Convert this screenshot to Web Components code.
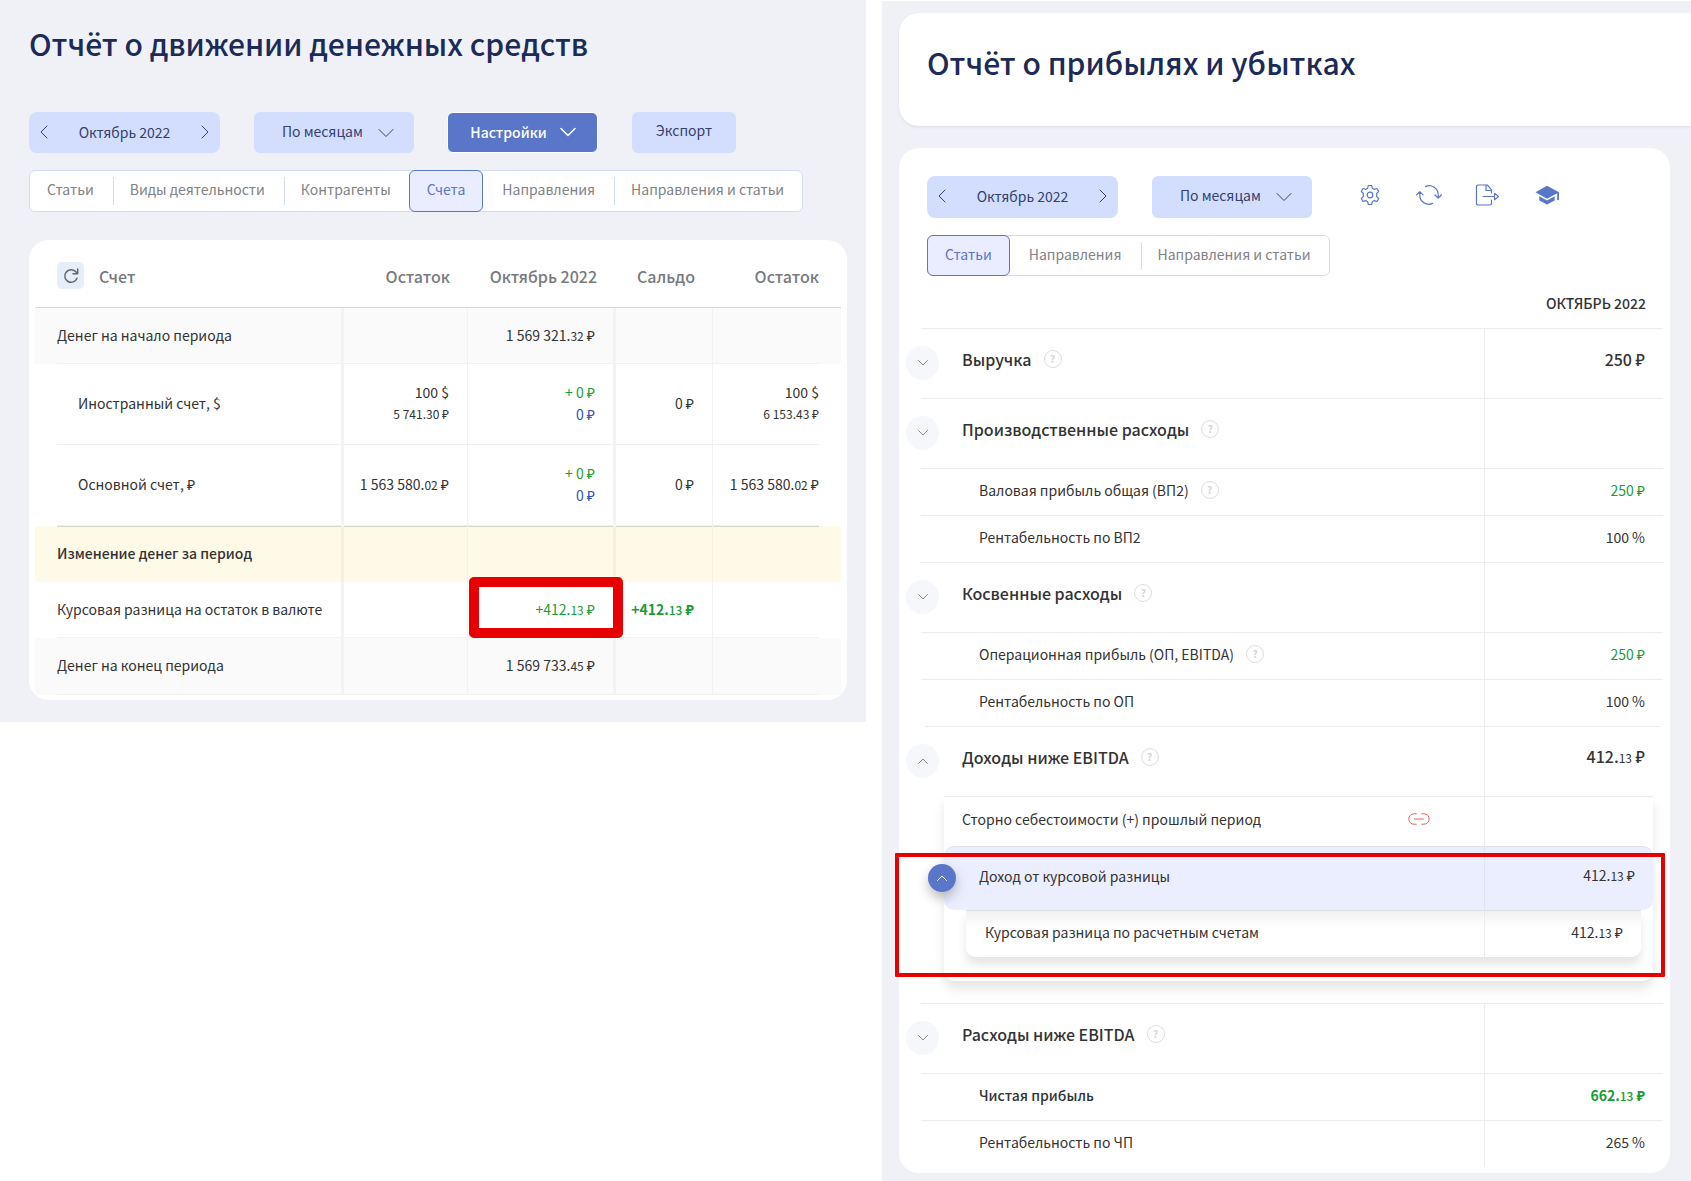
<!DOCTYPE html>
<html lang="ru">
<head>
<meta charset="utf-8">
<meta name="viewport" content="width=device-width, initial-scale=1">
<title>Финансовые отчёты</title>
<style>
  html { background: #fff; }
  body {
    margin: 0;
    font-family: "Noto Sans CJK SC", "Noto Sans", sans-serif;
    font-size: 14px;
    line-height: 20px;
    color: #333;
    --surface: #f0f1f7;
    --line: #ececee;
    --blue: #5a76c8;
    --soft-blue: #d3deff;
    --navy: #1c2a57;
    --green: #1a9c36;
    --mark: #e60000;
  }
</style>
</head>
<body>
<reports-page></reports-page>
<script>
const ICONS = {
  left: [12, 16, '<path d="M9 2 3 8l6 6"/>'],
  right: [12, 16, '<path d="m3 2 6 6-6 6"/>'],
  down: [16, 10, '<path d="m1 1.500 7 7 7-7"/>'],
  smallDown: [10, 6, '<path d="M.5.5 5 5 9.500.5"/>'],
  smallUp: [10, 6, '<path d="M.5 5.500 5 1l4.500 4.500"/>'],
  reload: [16, 16, '<path stroke-width="1.500" d="M14 10.200A6.300 6.300 0 1 1 12.600 3.600L14.500 5.600M14.700 1v4.800H10"/>'],
  gear: [22, 22, '<circle cx="11" cy="11" r="2.800"/><path d="M9.300 1.500h3.400l.6 2.700 2 1.200 2.700-.9 1.700 3-2 1.900v3.200l2 1.900-1.700 3-2.700-.9-2 1.200-.6 2.700H9.300l-.6-2.700-2-1.200-2.700.9-1.700-3 2-1.900V9.400l-2-1.900 1.700-3 2.700.9 2-1.200z"/>'],
  sync: [26, 22, '<path d="M9.500 2.600a9 9 0 0 1 12.700 8.300v3M19 11l3.200 3.200L25.400 11M16.500 19.400A9 9 0 0 1 3.800 11V7.600M.6 10.800l3.200-3.200L7 10.800"/>'],
  exportFile: [26, 22, '<path d="M16.500 9V5.800L12.300 1H3.200A1.700 1.700 0 0 0 1.500 2.700v16.600A1.700 1.700 0 0 0 3.200 21h11.600a1.700 1.700 0 0 0 1.700-1.700V16M11 1.300V6.500h5.300M8 12.500h11.500M19.500 9.300v6.400l4-3.200z"/>'],
  study: [24, 20, '<path fill="currentColor" stroke="none" d="M12 .8 24 7.200V15h-1.800V8.300L12 13.800.5 7.200zM4.300 11.200 12 15.400l7.700-4.200v4.300L12 19.600l-7.700-4.100z"/>'],
  link: [22, 12, '<path d="M8.300.8H6a5.200 5.200 0 0 0 0 10.400h2.300M13.700.8H16a5.200 5.200 0 0 1 0 10.400h-2.300M6.500 6h9"/>'],
};

function define(name, css, html) {
  customElements.define(name, class extends HTMLElement {
    connectedCallback() {
      if (this.shadowRoot) return;
      const attr = (key, fallback = '') => this.getAttribute(key) ?? fallback;
      this.attachShadow({ mode: 'open' }).innerHTML =
        `<style>*{box-sizing:border-box}:host{box-sizing:border-box}button,select{font:inherit;color:inherit;margin:0;padding:0;border:0;background:none;cursor:pointer}${css}</style>` +
        (typeof html === 'function' ? html(attr) : html);
    }
  });
}

define('ui-icon', `
  :host { display: inline-flex; flex: none; }
  svg { display: block; fill: none; stroke: currentColor; stroke-width: var(--stroke, 1.2); stroke-linecap: round; stroke-linejoin: round; }
`, attr => {
  const [w, h, body] = ICONS[attr('name')];
  return `<svg width="${w}" height="${h}" viewBox="0 0 ${w} ${h}" aria-hidden="true">${body}</svg>`;
});

/* Amount with small kopecks: "412.13 ₽" */
define('money-amount', `
  :host { white-space: nowrap; }
  small { font-size: 12px; font-weight: var(--cents-weight, inherit); }
`, attr => {
  const [whole, cents] = attr('value').split('.');
  return `${whole}${cents ? `.<small>${cents}</small>` : ''} <span>${attr('unit', '₽')}</span>`;
});

define('help-hint', `
  :host { display: inline-flex; flex: none; }
  button { width: 18px; height: 18px; border: 1px solid #dedede; border-radius: 50%; color: #d4d4d4; font-size: 10px; line-height: 16px; font-weight: 700; text-align: center; }
`, '<button type="button" aria-label="Подсказка">?</button>');

define('period-picker', `
  :host { display: flex; align-items: center; justify-content: space-between; width: 191px; height: var(--bar-height); padding: 0 7px 2px; border-radius: 8px; background: var(--soft-blue); color: #34416e; flex: none; --stroke: 1; }
  button { display: flex; padding: 4px 2px; }
`, `<button type="button" aria-label="Предыдущий период"><ui-icon name="left"></ui-icon></button>
    <slot></slot>
    <button type="button" aria-label="Следующий период"><ui-icon name="right"></ui-icon></button>`);

define('period-select', `
  :host { display: grid; align-items: center; width: 160px; height: var(--bar-height); border-radius: 6px; background: var(--soft-blue); color: #34416e; flex: none; --stroke: 1; }
  select, ui-icon { grid-area: 1 / 1; }
  select { appearance: none; width: 100%; height: 100%; padding: 0 28px 4px; }
  ui-icon { justify-self: end; margin-right: 20px; pointer-events: none; }
`, attr => `<select aria-label="Группировка"><option>${attr('value')}</option></select><ui-icon name="down"></ui-icon>`);

define('action-button', `
  :host { display: flex; flex: none; }
  button { height: var(--bar-height); width: 104px; padding-bottom: 5px; border-radius: 6px; background: var(--soft-blue); color: #34416e; display: flex; align-items: center; justify-content: center; gap: 13px; }
  :host([primary]) { margin-left: -1px; --stroke: 1.5; }
  :host([primary]) button { width: 151px; padding: 0 0 1px 1px; border: 1px solid #fff; background: var(--blue); color: #fff; font-weight: 500; }
`, attr => `<button type="button"><slot></slot>${attr('primary', null) !== null ? '<ui-icon name="down"></ui-icon>' : ''}</button>`);

define('tab-bar', `
  :host { display: flex; }
  nav { display: flex; height: var(--tab-height); border: 1px solid #d3dcf4; border-radius: 6px; background: #fff; color: #808285; }
  button { display: flex; align-items: center; padding: 0 17px 4px; white-space: nowrap; }
  button + button { margin-left: 2px; }
  button + button::before { content: ""; width: 1px; height: 28px; background: #d3dcf4; margin: 4px 16px 0 -17px; }
  button.active { margin: -1px 0 -1px -1px; border: 1px solid var(--blue); border-radius: 6px; background: #e9edff; color: var(--blue); }
  button + button.active { margin-left: 1px; }
  button.active::before, .active + button::before { display: none; }
  nav button:last-child { padding-right: 18px; }
`, attr => `<nav>${attr('tabs').split('|').map(t =>
  `<button type="button"${t === attr('active') ? ' class="active" aria-current="true"' : ''}>${t}</button>`).join('')}</nav>`);

define('cash-table', `
  :host { display: block; padding: 0 6px 5px; border-radius: 20px; background: #fff; }
  table { width: 100%; border-collapse: separate; border-spacing: 0; table-layout: fixed; }
  td, th { padding: 0 18px 2px 0; }
  th { height: 68px; padding-top: 6px; border-bottom: 1px solid #d6d7e3; font-size: 16px; font-weight: 500; color: #777a7e; text-align: right; }
  th:first-child { text-align: left; padding-left: 22px; }
  td { height: 56px; text-align: right; border-right: 1px solid #f1f1f2; background: var(--row, #fff) linear-gradient(var(--rule, #f1f1f2), var(--rule, #f1f1f2)) 0 100% / 100% 1px no-repeat; }
  td:nth-child(1), td:nth-child(3) { border-right: 3px solid #f3f3f4; }
  td:first-child { padding-left: 22px; text-align: left; background-position: 22px 100%; }
  td:last-child { padding-right: 22px; border-right: 0; background-size: calc(100% - 22px) 1px; }
  th:last-child { padding-right: 22px; }
  th:nth-child(3) { padding-right: 19px; }
  .account td { height: 81px; padding-bottom: 3px; }
  .account td:first-child { padding-left: 43px; }
  .grey { --row: #fafafa; }
  .total { --row: #fffae8; --rule: #d6d5cb; }
  .total td { font-weight: 500; background-position-y: 0; border-color: #f6f1de; }
  .last td { height: 57px; padding-bottom: 3px; }
  .head { display: flex; align-items: center; gap: 15px; }
  .reload { display: flex; width: 27px; height: 27px; align-items: center; justify-content: center; border-radius: 5px; background: #e6eef9; color: #666; }
  .two { display: flex; flex-direction: column; align-items: flex-end; line-height: 22px; }
  .minor { font-size: 12px; }
  .in { color: var(--green); } .out { color: #2f50b8; }
  .strong { font-weight: 700; --cents-weight: 500; }
  .marked { position: relative; }
  .marked::after { content: ""; position: absolute; inset: -5px -10px 0 1px; border: 10px solid var(--mark); border-radius: 5px; pointer-events: none; }
`, `<table>
  <colgroup><col><col style="width:124px"><col style="width:148px"><col style="width:97px"><col style="width:128px"></colgroup>
  <thead><tr>
    <th scope="col"><div class="head"><button type="button" class="reload" aria-label="Обновить"><ui-icon name="reload"></ui-icon></button>Счет</div></th>
    <th scope="col">Остаток</th><th scope="col">Октябрь 2022</th><th scope="col">Сальдо</th><th scope="col">Остаток</th>
  </tr></thead>
  <tbody>
    <tr class="grey"><td>Денег на начало периода</td><td></td><td><money-amount value="1 569 321.32"></money-amount></td><td></td><td></td></tr>
    <tr class="account"><td>Иностранный счет, $</td>
      <td><div class="two"><span>100 $</span><span class="minor">5 741.30 ₽</span></div></td>
      <td><div class="two"><money-amount class="in" value="+ 0"></money-amount><money-amount class="out" value="0"></money-amount></div></td>
      <td><money-amount value="0"></money-amount></td>
      <td><div class="two"><span>100 $</span><span class="minor">6 153.43 ₽</span></div></td></tr>
    <tr class="account"><td>Основной счет, ₽</td>
      <td><money-amount value="1 563 580.02"></money-amount></td>
      <td><div class="two"><money-amount class="in" value="+ 0"></money-amount><money-amount class="out" value="0"></money-amount></div></td>
      <td><money-amount value="0"></money-amount></td>
      <td><money-amount value="1 563 580.02"></money-amount></td></tr>
    <tr class="total"><td>Изменение денег за период</td><td></td><td></td><td></td><td></td></tr>
    <tr><td>Курсовая разница на остаток в валюте</td><td></td>
      <td class="marked"><money-amount class="in" value="+412.13"></money-amount></td>
      <td><money-amount class="in strong" value="+412.13"></money-amount></td><td></td></tr>
    <tr class="grey last"><td>Денег на конец периода</td><td></td><td><money-amount value="1 569 733.45"></money-amount></td><td></td><td></td></tr>
  </tbody></table>`);

const groupRow = (label, value = '', open = false) => `
  <tr class="group${open ? ' open' : ''}"><td><div class="cell">
    <button type="button" class="toggle" aria-label="${open ? 'Свернуть' : 'Развернуть'}"><ui-icon name="${open ? 'smallUp' : 'smallDown'}"></ui-icon></button>
    <span class="label">${label}<help-hint></help-hint></span></div></td>
    <td>${value && `<money-amount value="${value}"></money-amount>`}</td></tr>`;
const itemRow = (label, value, unit, cls = '', hint = false) => `
  <tr class="item ${cls}"><td><span class="label">${label}${hint ? '<help-hint></help-hint>' : ''}</span></td>
    <td><money-amount value="${value}" unit="${unit}"></money-amount></td></tr>`;

define('profit-table', `
  :host { display: block; --stroke: 1; }
  table { width: 100%; border-collapse: separate; border-spacing: 0; table-layout: fixed; }
  td, th { padding: 0; }
  .main > thead th { height: 52px; padding: 2px 17px 0 0; text-align: right; font-weight: 500; text-transform: uppercase; }
  .group > td, .item > td { border: 0 solid var(--line); background: linear-gradient(var(--line), var(--line)) 0 0 / 100% 1px no-repeat; }
  .group > td:first-child, .item > td:first-child { background-position-x: 15px; }
  .group.open > td:first-child { background-position-x: 19px; }
  .group.open > td:last-child { background-size: calc(100% - 3px) 1px; }
  td:last-child:not([colspan]) { border-left: 1px solid var(--line); text-align: right; padding-right: 18px; }
  .group > td { height: 70px; font-size: 16px; font-weight: 500; --cents-weight: 400; }
  .group > td:last-child { padding-bottom: 9px; }
  .group .label { padding-bottom: 8px; }
  .item > td { height: 47px; padding-bottom: 3px; }
  .item > td:first-child { padding-left: 73px; }
  .item.profit > td:last-child { color: var(--green); }
  .item.strong > td { font-weight: 500; }
  .item.strong > td:last-child { font-weight: 700; --cents-weight: 500; }
  .cell { display: flex; align-items: center; gap: 23px; }
  .label { display: inline-flex; align-items: center; gap: 12px; }
  .toggle { display: flex; align-items: center; justify-content: center; width: 33px; height: 34px; border-radius: 50%; background: #f5f7fb; color: #85888e; }
  .panel { position: relative; margin: 0 10px 22px 38px; padding-bottom: 24px; border-top: 1px solid var(--line); border-radius: 0 0 10px 10px; background: #fff; box-shadow: 0 8px 12px rgba(0,0,0,.1); }
  .panel::after { content: ""; position: absolute; inset: 56px -12px 4px -49px; border: 4px solid var(--mark); border-radius: 1px; pointer-events: none; }
  .storno td { height: 49px; }
  .storno td:first-child { padding: 0 54px 6px 18px; }
  .split { display: flex; align-items: center; justify-content: space-between; }
  .split ui-icon { color: #e06666; }
  .rate td { height: 64px; background: #ebeeff; border-top: 1px solid #dfe2ee; padding-bottom: 2px; }
  .rate td:first-child { border-radius: 10px 0 0 10px; }
  .rate td:last-child { border-radius: 0 10px 10px 0; border-left-color: #e1e4f0; padding-bottom: 7px; }
  .rate .label { padding-bottom: 3px; }
  .round { display: flex; align-items: center; justify-content: center; width: 28px; height: 28px; margin-left: -16px; border-radius: 50%; background: var(--blue); color: #fff; box-shadow: 0 6px 12px rgba(0,0,0,.25); }
  .nested { margin: 0 12px 0 22px; border-radius: 0 0 10px 10px; background: #fff linear-gradient(#f1f1f1, #fff 16px); border-top: 1px solid #dfe0e4; box-shadow: 0 8px 10px rgba(0,0,0,.1); }
  .nested td { height: 46px; padding-bottom: 4px; }
  .nested td:first-child { padding-left: 19px; }
`, `<table class="main">
  <colgroup><col><col style="width:179px"></colgroup>
  <thead><tr><th></th><th scope="col">Октябрь 2022</th></tr></thead>
  <tbody>
  ${groupRow('Выручка', '250')}
  ${groupRow('Производственные расходы')}
  ${itemRow('Валовая прибыль общая (ВП2)', '250', '₽', 'profit', true)}
  ${itemRow('Рентабельность по ВП2', '100', '%')}
  ${groupRow('Косвенные расходы')}
  ${itemRow('Операционная прибыль (ОП, EBITDA)', '250', '₽', 'profit', true)}
  ${itemRow('Рентабельность по ОП', '100', '%')}
  ${groupRow('Доходы ниже EBITDA', '412.13', true)}
  <tr><td colspan="2"><div class="panel">
    <table><colgroup><col><col style="width:169px"></colgroup><tbody>
      <tr class="storno"><td><div class="split">Сторно себестоимости (+) прошлый период<ui-icon name="link"></ui-icon></div></td><td></td></tr>
      <tr class="rate"><td><div class="cell"><button type="button" class="round" aria-label="Свернуть"><ui-icon name="smallUp"></ui-icon></button><span class="label">Доход от курсовой разницы</span></div></td><td><money-amount value="412.13"></money-amount></td></tr>
    </tbody></table>
    <div class="nested"><table><colgroup><col><col style="width:157px"></colgroup><tbody>
      <tr><td>Курсовая разница по расчетным счетам</td><td><money-amount value="412.13"></money-amount></td></tr>
    </tbody></table></div>
  </div></td></tr>
  ${groupRow('Расходы ниже EBITDA')}
  ${itemRow('Чистая прибыль', '662.13', '₽', 'profit strong')}
  ${itemRow('Рентабельность по ЧП', '265', '%')}
  </tbody></table>`);

define('icon-actions', `
  :host { display: flex; align-items: center; gap: 34px; padding-bottom: 4px; color: var(--blue); }
  button { display: flex; justify-content: center; width: 25px; }
`, `<button type="button" aria-label="Настройки"><ui-icon name="gear"></ui-icon></button>
    <button type="button" aria-label="Обновить"><ui-icon name="sync"></ui-icon></button>
    <button type="button" aria-label="Экспорт"><ui-icon name="exportFile"></ui-icon></button>
    <button type="button" aria-label="Обучение"><ui-icon name="study"></ui-icon></button>`);

define('report-title', `
  :host { display: block; }
  h1 { margin: 0; font-size: 30px; line-height: 40px; font-weight: 500; color: var(--navy); white-space: nowrap; }
`, '<h1><slot></slot></h1>');

define('cash-report', `
  :host { display: block; padding: 23px 19px 22px 29px; background: var(--surface); --bar-height: 41px; --tab-height: 42px; }
  .bar { display: flex; gap: 34px; margin: 49px 0 17px; }
  cash-table { margin-top: 28px; }
`, `<report-title>Отчёт о движении денежных средств</report-title>
  <div class="bar"><period-picker>Октябрь 2022</period-picker><period-select value="По месяцам"></period-select>
  <action-button primary>Настройки</action-button><action-button>Экспорт</action-button></div>
  <tab-bar tabs="Статьи|Виды деятельности|Контрагенты|Счета|Направления|Направления и статьи" active="Счета"></tab-bar>
  <cash-table></cash-table>`);

define('profit-report', `
  :host { display: block; margin-top: 1px; padding: 12px 0 8px 17px; background: var(--surface); --bar-height: 42px; --tab-height: 41px; }
  header { padding: 29px 28px 44px; border-radius: 20px 0 0 20px; background: #fff; box-shadow: 0 1px 3px rgba(30,40,90,.1); }
  .card { margin: 22px 21px 0 0; padding: 28px 7px 6px; border-radius: 20px; background: #fff; }
  .bar { display: flex; gap: 34px; margin: 0 21px 17px; }
  icon-actions { margin-left: 11px; }
  tab-bar { margin-left: 21px; }
`, `<header><report-title>Отчёт о прибылях и убытках</report-title></header>
  <div class="card">
    <div class="bar"><period-picker>Октябрь 2022</period-picker><period-select value="По месяцам"></period-select><icon-actions></icon-actions></div>
    <tab-bar tabs="Статьи|Направления|Направления и статьи" active="Статьи"></tab-bar>
    <profit-table></profit-table>
  </div>`);

define('reports-page', `
  :host { display: grid; grid-template-columns: minmax(0, 866fr) minmax(0, 809fr); column-gap: 16px; align-items: start; }
`, '<cash-report></cash-report><profit-report></profit-report>');
</script>
</body>
</html>
